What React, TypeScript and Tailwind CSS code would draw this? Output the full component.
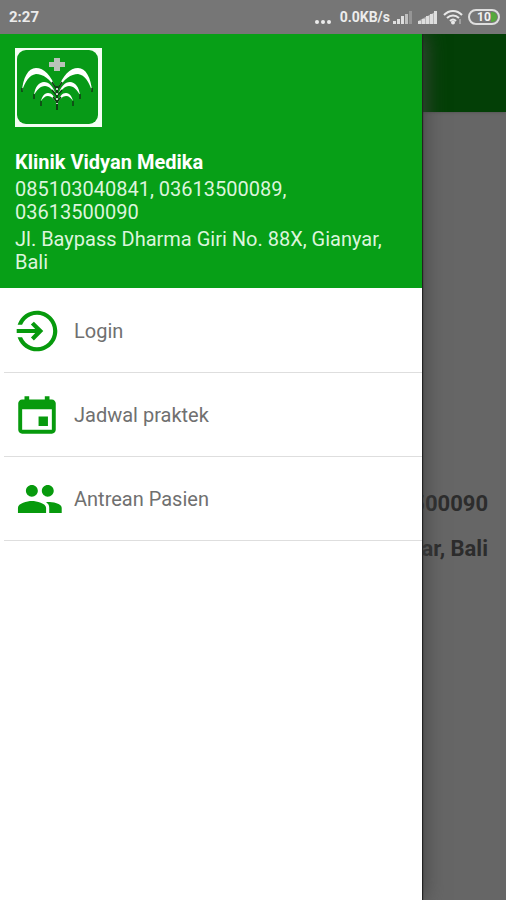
import type { ReactNode } from "react";
import { IoMdCalendar, IoMdLogIn, IoMdPeople } from "react-icons/io";

const phones = "085103040841, 03613500089, 03613500090";
const address = "Jl. Baypass Dharma Giri No. 88X, Gianyar, Bali";

function Signal({ faded }: { faded?: boolean }) {
  return (
    <svg viewBox="0 0 19 13" className="h-[13px] w-[19px]" fill="#dedede" aria-hidden="true">
      <path d="M0 10h3v3H0zM4 8h3v5H4zM8 5h3v8H8z" />
      <path d="M12 3h3v10h-3z" opacity={faded ? 0.7 : 1} />
      <path d="M16 0h3v13h-3z" opacity={faded ? 0.3 : 1} />
      {!faded && <path d="M0 10L19 0v13H0z" opacity=".6" />}
    </svg>
  );
}

function Wifi() {
  return (
    <svg viewBox="0 0 20 16" className="h-4 w-5" fill="none" stroke="#e8e8e8" strokeWidth="2" aria-hidden="true">
      <path d="M1 6C6 .5 14 .5 19 6M4 9c3.500-3.500 8.500-3.500 12 0M7 12c2-2 4-2 6 0" />
      <circle cx="10" cy="13.500" r="1" fill="#e8e8e8" />
      <path d="M17 10v5" strokeWidth="1" opacity=".7" />
    </svg>
  );
}

function Battery() {
  return (
    <svg viewBox="0 0 32 16" className="h-4 w-8" aria-hidden="true">
      <rect x="1" y="1" width="30" height="14" rx="7" fill="#777" stroke="#dedede" strokeWidth="2" />
      <path d="M23 3h1a5 5 0 0 1 0 10h-1z" fill="#55a83c" />
      <text x="16" y="12" textAnchor="middle" fontSize="12" fontWeight="700" fill="#f2f2f2" fontFamily="Roboto, sans-serif">
        10
      </text>
    </svg>
  );
}

function StatusBar() {
  return (
    <div className="flex h-[34px] shrink-0 items-center justify-between bg-[#767676] pr-[6px] pl-[9px] text-[#ececec]">
      <span className="text-[15px] font-bold">2:27</span>
      <div className="flex items-center">
        <span className="mt-[9px] mr-[9px] flex gap-[2px]">
          <i className="size-[4px] rounded-full bg-[#ececec]" />
          <i className="size-[4px] rounded-full bg-[#ececec]" />
          <i className="size-[4px] rounded-full bg-[#ececec]" />
        </span>
        <span className="mr-[3px] text-[14px] font-bold">0.0KB/s</span>
        <Signal faded />
        <span className="mr-[6px] ml-[6px] flex">
          <Signal />
        </span>
        <Wifi />
        <span className="ml-[5px] flex">
          <Battery />
        </span>
      </div>
    </div>
  );
}

function Fronds() {
  return (
    <g>
      <g fill="#fff">
        <path d="M41 41C36 27 29 20 21 20 13 20 8 30 7 43 10 34 14 27 21 26c7 0 14 5 20 15z" />
        <path d="M41 47C38 38 34 34 29 34c-5 0-9 5-10 13 3-5 6-9 11-9 4 0 8 4 11 9z" />
        <path d="M41 54C39 48 37 45 33 45c-4 0-6 4-7 8 2-3 4-5 7-5s6 3 8 6z" />
      </g>
      <path
        d="M7 40v4M19 46v5M26 53v5M37 34l5 8M37 42l5 6M38 49l4 5"
        fill="none"
        stroke="#123d16"
        strokeWidth="1.500"
      />
    </g>
  );
}

function Logo() {
  return (
    <svg viewBox="0 0 87 79" className="h-[79px] w-[87px]" role="img" aria-label="Klinik Vidyan Medika">
      <rect width="87" height="79" fill="#f4fff4" />
      <rect x="2" y="2" width="81" height="74" rx="9" fill="#079a17" />
      <path d="M39 10h6v4h5v5h-5v4h-6v-4h-5v-5h5z" fill="#b9c3ba" />
      <Fronds />
      <g transform="translate(84 0) scale(-1 1)">
        <Fronds />
      </g>
      <path d="M42 38v24" stroke="#123d16" strokeWidth="2" />
      <path d="M42 40v16" stroke="#c5d0c5" strokeWidth="2" strokeDasharray="2 3" />
    </svg>
  );
}

function MenuItem({ icon, label }: { icon: ReactNode; label: string }) {
  return (
    <li className="ml-1 border-b border-[#dedede]">
      <a href="#" className="flex h-[83px] items-center pl-[8px] text-[20px] text-[#707070]">
        <span className="flex w-[62px] text-[#079a0d]">{icon}</span>
        {label}
      </a>
    </li>
  );
}

export default function App() {
  return (
    <div className="flex min-h-screen flex-col bg-[#666] font-[Roboto,sans-serif]">
      <StatusBar />
      <div className="relative flex grow flex-col overflow-hidden">
        <header className="h-[78px] bg-[#033f06] shadow-sm" />
        <main className="flex flex-col gap-4 pt-[377px] pr-[18px] text-right text-[22px] leading-[29px] font-bold text-[#2c2c2c]">
          <p>03613500090</p>
          <p>Gianyar, Bali</p>
        </main>

        <aside className="absolute inset-y-0 right-[84px] left-0 bg-white shadow-[1px_0_1px_#222,2px_0_20px_#444]">
          <div className="bg-[#079f17] px-[15px] pt-[14px] pb-[14px] text-[20px] leading-[23px] text-[#dcf5dc]">
            <Logo />
            <h1 className="mt-6 mb-1 font-bold text-white">Klinik Vidyan Medika</h1>
            <p className="mb-1">{phones}</p>
            <p>{address}</p>
          </div>
          <nav>
            <ul className="pt-px">
              <MenuItem icon={<IoMdLogIn size={50} />} label="Login" />
              <MenuItem icon={<IoMdCalendar size={50} />} label="Jadwal praktek" />
              <MenuItem
                icon={<IoMdPeople viewBox="12 0 512 512" size={50} className="ml-1" />}
                label="Antrean Pasien"
              />
            </ul>
          </nav>
        </aside>
      </div>
    </div>
  );
}
